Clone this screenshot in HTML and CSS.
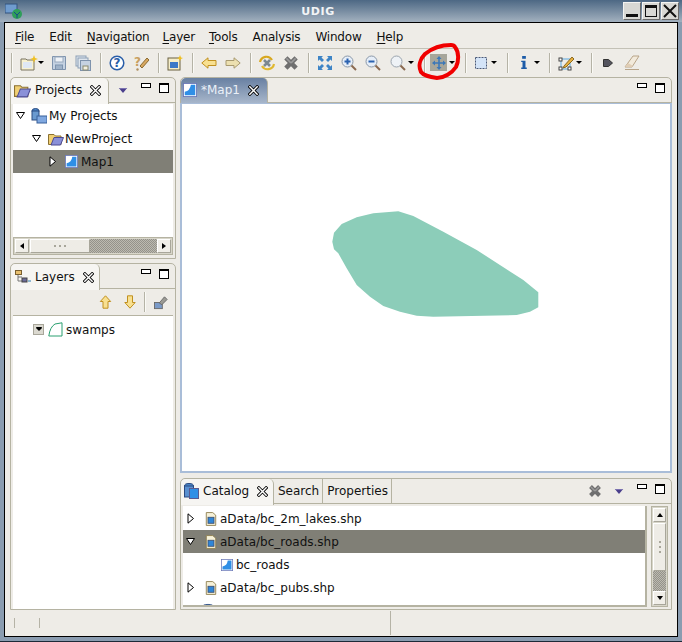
FILE: index.html
```html
<!DOCTYPE html>
<html lang="en">
<head>
    <meta charset="UTF-8">
    <title>UDIG</title>
    <link rel="stylesheet" href="styles.css">
</head>
<body>
<svg class="defs" width="0" height="0">
    <symbol id="map" viewBox="0 0 16 16">
        <rect x="0.5" y="0.5" width="15" height="15" fill="#fff" stroke="#6a78b8"/>
        <path d="M2 14 L2 10 Q8 9 9 2 L14 2 L14 14 Z" fill="#2f8fe6"/>
    </symbol>
    <symbol id="shp" viewBox="0 0 14 16">
        <path d="M1.5 .5 H9 L12.5 3.5 V15.5 H1.5 Z" fill="#f6f1d8" stroke="#8a7a48"/>
        <rect x="3.5" y="6" width="7" height="7" fill="#2f86d8" stroke="#41506e"/>
    </symbol>
    <symbol id="close" viewBox="0 0 12 12">
        <path d="M2 2 L10 10 M10 2 L2 10" stroke="#000" stroke-width="3.4" stroke-linecap="square"/>
        <path d="M2 2 L10 10 M10 2 L2 10" stroke="#fff" stroke-width="1.6" stroke-linecap="square"/>
    </symbol>
    <symbol id="bigx" viewBox="0 0 14 14">
        <path d="M2.5 2.5 L11.5 11.5 M11.5 2.5 L2.5 11.5" stroke="#6f6f6f" stroke-width="4"/>
        <path d="M3 3 L7 7 M11 3 L7 7" stroke="#9a9a9a" stroke-width="1.5"/>
    </symbol>
    <symbol id="view" viewBox="0 0 12 8">
        <path d="M1 1 H11 L6 7 Z" fill="#4a3f8c"/>
        <path d="M1 1 H11 L10 2 H2 Z" fill="#8c84bc"/>
    </symbol>
    <symbol id="min" viewBox="0 0 10 5">
        <rect x="0.5" y="0.5" width="9" height="4" fill="#fff" stroke="#000"/>
    </symbol>
    <symbol id="max" viewBox="0 0 10 10">
        <rect x="0.5" y="0.5" width="9" height="9" fill="#fff" stroke="#000"/>
        <rect x="0" y="0" width="10" height="2" fill="#000"/>
    </symbol>
    <symbol id="open" viewBox="0 0 9 9">
        <path d="M.5 1.5 H8.5 L4.5 7.5 Z" fill="#fff" stroke="#000"/>
    </symbol>
    <symbol id="shut" viewBox="0 0 9 11">
        <path d="M2 .8 V10.2 L7.5 5.5 Z" fill="#fff" stroke="#000"/>
    </symbol>
    <symbol id="folder" viewBox="0 0 16 14">
        <path d="M.5 2.5 H6 L7.5 4 H13 V12.5 H.5 Z" fill="#f0cf73" stroke="#8a7030"/>
        <path d="M3 13 L6 5.5 H15.5 L12.5 13 Z" fill="#8a90d8" stroke="#4c4a90"/>
    </symbol>
</svg>

<div class="window">
    <div class="titlebar">
        <svg class="app-icon" width="18" height="17" viewBox="0 0 18 17">
            <rect x="0" y="1" width="12" height="9" fill="#6f9ccf" stroke="#33527c"/>
            <circle cx="12" cy="11" r="5" fill="#2f9e5a"/>
            <path d="M9 9 L12 12 L15 9 M12 12 V15" stroke="#174a8a" fill="none"/>
        </svg>
        <span class="app-title">UDIG</span>
        <div class="wm-buttons">
            <span class="wm-btn"><svg width="14" height="14" viewBox="0 0 14 14"><rect x="1" y="10" width="12" height="3" fill="#111"/></svg></span>
            <span class="wm-btn"><svg width="14" height="14" viewBox="0 0 14 14"><rect x="1.5" y="2" width="11" height="10.5" fill="none" stroke="#111"/><rect x="1" y="1" width="12" height="3" fill="#111"/></svg></span>
            <span class="wm-btn"><svg width="14" height="14" viewBox="0 0 14 14"><path d="M1 1 L13 13 M13 1 L1 13" stroke="#111" stroke-width="2"/></svg></span>
        </div>
    </div>

    <div class="client">
        <div class="menubar">
            <span class="menu"><u>F</u>ile</span>
            <span class="menu">Edit</span>
            <span class="menu menu-nav"><u>N</u>avigation</span>
            <span class="menu menu-layer"><u>L</u>ayer</span>
            <span class="menu"><u>T</u>ools</span>
            <span class="menu">Analysis</span>
            <span class="menu">Window</span>
            <span class="menu"><u>H</u>elp</span>
        </div>

        <div class="toolbar">
            <span class="sep"></span>
            <span class="tool tool-drop tool-new">
                <svg width="18" height="16" viewBox="0 0 18 16"><path d="M1 4 H6 L7 5 H14 V15 H1 Z" fill="#f7f1d0" stroke="#7a7560"/><rect x="3" y="7" width="9" height="6" fill="#dfe8f4"/><path d="M14 0 L15 3 L18 4 L15 5 L14 8 L13 5 L10 4 L13 3 Z" fill="#f0c020"/></svg>
                <i class="drop"></i>
            </span>
            <span class="tool">
                <svg width="16" height="16" viewBox="0 0 16 16"><path d="M1.5 1.5 H14.5 V14.5 H1.5 Z" fill="#c5d2e2" stroke="#7e93ad"/><rect x="4" y="2" width="8" height="5" fill="#eef2f7" stroke="#98a8bc"/><rect x="4.5" y="10" width="7" height="4.5" fill="#9fb2c8" stroke="#7e93ad"/></svg>
            </span>
            <span class="tool">
                <svg width="16" height="16" viewBox="0 0 16 16"><rect x="1" y="1" width="10" height="10" fill="#dfe6ee" stroke="#8da0b6"/><rect x="3" y="3" width="10" height="10" fill="#dfe6ee" stroke="#8da0b6"/><rect x="5.5" y="5.5" width="10" height="10" fill="#c5d2e2" stroke="#7e93ad"/><rect x="8" y="11" width="5" height="4" fill="#f2f0e0" stroke="#8a8a70"/></svg>
            </span>
            <span class="sep"></span>
            <span class="tool">
                <svg width="16" height="16" viewBox="0 0 16 16"><circle cx="8" cy="8" r="6.8" fill="#fff" stroke="#2a5ea8" stroke-width="1.5"/><text x="8" y="12" class="tool-q">?</text></svg>
            </span>
            <span class="tool">
                <svg width="16" height="16" viewBox="0 0 16 16"><path d="M7 11 L14 3 L16 5 L9 13 Z" fill="#d8a860" stroke="#8a6a30"/><text x="4.5" y="11" class="tool-q tool-q-tan">?</text><circle cx="4.5" cy="14.5" r="1.2" fill="#b09060"/></svg>
            </span>
            <span class="sep"></span>
            <span class="tool">
                <svg width="16" height="16" viewBox="0 0 16 16"><rect x="1" y="3" width="12" height="12" fill="#f5edc8" stroke="#6a6040"/><rect x="3" y="7" width="8" height="6" fill="#3a78c8"/><path d="M13 0 L14 2.5 L16 3 L14 4 L13 6 L12 4 L10 3 L12 2.5 Z" fill="#f0c020"/></svg>
            </span>
            <span class="sep"></span>
            <span class="tool">
                <svg width="16" height="12" viewBox="0 0 16 12"><path d="M.8 6 L7 .8 V3.5 H15 V8.5 H7 V11.2 Z" fill="#f8e090" stroke="#c09020"/></svg>
            </span>
            <span class="tool">
                <svg width="16" height="12" viewBox="0 0 16 12"><path d="M15.2 6 L9 .8 V3.5 H1 V8.5 H9 V11.2 Z" fill="#ece0b0" stroke="#a89a70"/></svg>
            </span>
            <span class="sep"></span>
            <span class="tool">
                <svg width="18" height="16" viewBox="0 0 18 16"><path d="M2 7 A6.5 6.5 0 0 1 14 5" fill="none" stroke="#d8a820" stroke-width="2.2"/><path d="M16 9 A6.5 6.5 0 0 1 4 11" fill="none" stroke="#e0b830" stroke-width="2.2"/><path d="M6 5 L12 11 M12 5 L6 11" stroke="#7a8890" stroke-width="2.6"/></svg>
            </span>
            <span class="tool">
                <svg width="16" height="16" viewBox="0 0 14 14"><use href="#bigx"/></svg>
            </span>
            <span class="sep"></span>
            <span class="tool">
                <svg width="16" height="16" viewBox="0 0 16 16"><path d="M1 6 V1 H6 L4.5 2.5 L7 5 L5 7 L2.5 4.5 Z M15 6 V1 H10 L11.5 2.5 L9 5 L11 7 L13.5 4.5 Z M1 10 V15 H6 L4.5 13.5 L7 11 L5 9 L2.5 11.5 Z M15 10 V15 H10 L11.5 13.5 L9 11 L11 9 L13.5 11.5 Z" fill="#3d84c6"/></svg>
            </span>
            <span class="tool">
                <svg width="16" height="16" viewBox="0 0 16 16"><circle cx="6.5" cy="6.5" r="5.5" fill="#e6eef8" stroke="#8a98a8"/><path d="M3.5 6.5 H9.5 M6.5 3.5 V9.5" stroke="#2a62b0" stroke-width="2"/><path d="M10.5 10.5 L15 15" stroke="#8a6a50" stroke-width="2"/></svg>
            </span>
            <span class="tool">
                <svg width="16" height="16" viewBox="0 0 16 16"><circle cx="6.5" cy="6.5" r="5.5" fill="#e6eef8" stroke="#8a98a8"/><path d="M3.5 6.5 H9.5" stroke="#2a62b0" stroke-width="2"/><path d="M10.5 10.5 L15 15" stroke="#8a6a50" stroke-width="2"/></svg>
            </span>
            <span class="tool tool-drop tool-zoom">
                <svg width="16" height="16" viewBox="0 0 16 16"><circle cx="6.5" cy="6.5" r="5.5" fill="#eef2f6" stroke="#9aa4ae"/><path d="M10.5 10.5 L15 15" stroke="#8a6a50" stroke-width="2"/></svg>
                <i class="drop"></i>
            </span>
            <span class="sep"></span>
            <span class="tool tool-drop tool-move">
                <span class="tool-on">
                    <svg width="14" height="14" viewBox="0 0 14 14"><path d="M7 0 L9.5 3 H7.8 V6.2 H11 V4.5 L14 7 L11 9.5 V7.8 H7.8 V11 H9.5 L7 14 L4.5 11 H6.2 V7.8 H3 V9.5 L0 7 L3 4.5 V6.2 H6.2 V3 H4.5 Z" fill="#3c78b8"/></svg>
                </span>
                <i class="drop"></i>
            </span>
            <span class="sep"></span>
            <span class="tool tool-drop tool-box">
                <svg width="12" height="12" viewBox="0 0 12 12"><rect x="0.5" y="0.5" width="11" height="11" fill="#d4e4f8" stroke="#4a5a78" stroke-dasharray="2 1"/></svg>
                <i class="drop"></i>
            </span>
            <span class="sep"></span>
            <span class="tool tool-drop tool-box tool-info">
                <svg width="6" height="13" viewBox="0 0 6 14"><rect x="1" y="0" width="4" height="3" fill="#1d5ca8"/><path d="M0 5 H4.6 V12.5 H6 V14 H0 V12.5 H1.4 V6.5 H0 Z" fill="#1d5ca8"/></svg>
                <i class="drop"></i>
            </span>
            <span class="sep"></span>
            <span class="tool tool-drop tool-box tool-edit">
                <svg width="16" height="16" viewBox="0 0 16 16"><path d="M3 4 H12 V14 H3 Z" fill="none" stroke="#5aa8e0"/><rect x="1" y="3" width="3" height="3" fill="#fff" stroke="#444"/><rect x="1" y="12" width="3" height="3" fill="#fff" stroke="#444"/><rect x="10" y="12" width="3" height="3" fill="#fff" stroke="#444"/><path d="M6 11 L14 2 L16 4 L8 12 L5 13 Z" fill="#e8b040" stroke="#8a6a20"/></svg>
                <i class="drop"></i>
            </span>
            <span class="sep"></span>
            <span class="tool">
                <svg width="10" height="10" viewBox="0 0 10 10"><path d="M.5 1.5 H5.5 L9.5 5 L5.5 8.5 H.5 Z" fill="#55555f" stroke="#333"/></svg>
            </span>
            <span class="tool">
                <svg width="16" height="16" viewBox="0 0 16 16"><path d="M1 12 L9 1 H15 L8 12 Z" fill="#f2eadb" stroke="#b8a488"/><path d="M1 14.5 H15" stroke="#b8a488"/><path d="M1 12 L4 8 L9 11 L8 12 Z" fill="#e0cdb4"/></svg>
            </span>
        </div>

        <div class="workbench">
            <div class="col-left">
                <section class="panel panel-projects">
                    <div class="tabbar">
                        <div class="tab tab-on tab-projects">
                            <svg width="17" height="15"><use href="#folder"/></svg>
                            <span>Projects</span>
                            <svg class="tab-x" width="11" height="11"><use href="#close"/></svg>
                        </div>
                        <div class="tab-tools">
                            <svg class="t-view" width="10" height="7"><use href="#view"/></svg>
                            <svg class="t-min" width="10" height="5"><use href="#min"/></svg>
                            <svg width="10" height="10"><use href="#max"/></svg>
                        </div>
                    </div>
                    <div class="tree">
                        <div class="row ind-0">
                            <svg class="twist" width="9" height="9"><use href="#open"/></svg>
                            <svg class="row-icon" width="16" height="16" viewBox="0 0 16 16"><ellipse cx="4.5" cy="3" rx="3.5" ry="2.5" fill="#4a86c8" stroke="#2a4a80"/><rect x="1" y="3" width="7" height="9" fill="#6a9ad0" stroke="#2a4a80"/><rect x="6" y="8" width="10" height="7" fill="#80a8e0" stroke="#38609a"/></svg>
                            <span>My Projects</span>
                        </div>
                        <div class="row ind-1">
                            <svg class="twist" width="9" height="9"><use href="#open"/></svg>
                            <svg class="row-icon" width="16" height="14"><use href="#folder"/></svg>
                            <span>NewProject</span>
                        </div>
                        <div class="row ind-2 row-on">
                            <svg class="twist" width="9" height="11"><use href="#shut"/></svg>
                            <svg class="row-icon" width="13" height="13"><use href="#map"/></svg>
                            <span>Map1</span>
                        </div>
                    </div>
                    <div class="hscroll">
                        <span class="sb-btn sb-left"></span>
                        <span class="sb-thumb">
                            <i></i><i></i><i></i>
                        </span>
                        <span class="sb-track"></span>
                        <span class="sb-btn sb-right"></span>
                    </div>
                </section>

                <section class="panel panel-layers">
                    <div class="tabbar">
                        <div class="tab tab-on tab-layers">
                            <svg width="16" height="14" viewBox="0 0 16 14"><path d="M3 4 V11 H7 M3 7 H7" fill="none" stroke="#777"/><rect x="0.5" y="0.5" width="6" height="4" fill="#e8c070" stroke="#7a6030"/><rect x="7" y="8" width="5" height="4" fill="#6a6a98" stroke="#444"/><path d="M13 11 H16" stroke="#2a7ab0"/></svg>
                            <span>Layers</span>
                            <svg class="tab-x" width="11" height="11"><use href="#close"/></svg>
                        </div>
                        <div class="tab-tools">
                            <svg class="t-min" width="10" height="5"><use href="#min"/></svg>
                            <svg width="10" height="10"><use href="#max"/></svg>
                        </div>
                    </div>
                    <div class="view-bar">
                        <svg class="vb-up" width="13" height="14" viewBox="0 0 12 14"><path d="M6 .8 L11.2 6.5 H8.5 V13.2 H3.5 V6.5 H.8 Z" fill="#f8e090" stroke="#c09020"/></svg>
                        <svg width="12" height="14" viewBox="0 0 12 14"><path d="M6 13.2 L11.2 7.5 H8.5 V.8 H3.5 V7.5 H.8 Z" fill="#f8e090" stroke="#c09020"/></svg>
                        <span class="sep vb-sep"></span>
                        <svg width="14" height="15" viewBox="0 0 16 15"><rect x="0.5" y="7.5" width="9" height="7" fill="#7a9ac8" stroke="#666"/><path d="M6 8 L12 1 L15 4 L9 10 Z" fill="#9a9a94" stroke="#666"/></svg>
                    </div>
                    <div class="tree tree-layers">
                        <div class="row ind-layer">
                            <span class="check"><svg width="6" height="4" viewBox="0 0 7 5"><path d="M0 0 H7 V1.5 L3.5 5 L0 1.5 Z" fill="#000"/></svg></span>
                            <svg class="row-icon" width="15" height="15" viewBox="0 0 15 15"><path d="M.8 14 Q2 5 7 2 L14 .8 V14 Z" fill="#fff" stroke="#2aa070"/></svg>
                            <span>swamps</span>
                        </div>
                    </div>
                </section>
            </div>

            <div class="col-right">
                <section class="panel panel-map">
                    <div class="tabbar">
                        <div class="tab tab-blue tab-map">
                            <svg width="14" height="14"><use href="#map"/></svg>
                            <span>*Map1</span>
                            <svg class="tab-x" width="11" height="11"><use href="#close"/></svg>
                        </div>
                        <div class="tab-tools">
                            <svg class="t-min" width="10" height="5"><use href="#min"/></svg>
                            <svg width="10" height="10"><use href="#max"/></svg>
                        </div>
                    </div>
                    <div class="map-area">
                        <svg class="map-svg" viewBox="182 104 488 367">
                            <polygon fill="#8ccdb9" points="332.3,241.7 334,232.7 341.7,224 356.7,217.3 373.3,213.3 398.3,211.3 413.3,216 443.3,231.7 476.7,250 523.3,280 538.3,292.3 538.3,307.3 530,311.7 516.7,315 433.3,316.7 416.7,315.7 400,311.7 383.3,306 370,296.7 356.7,285 346.7,268.3 338.3,253.3 334,249.3"/>
                        </svg>
                    </div>
                </section>

                <section class="panel panel-catalog">
                    <div class="tabbar">
                        <div class="tab tab-on tab-catalog">
                            <svg width="15" height="16" viewBox="0 0 15 16"><ellipse cx="5" cy="3" rx="4.5" ry="2.5" fill="#4a86c8" stroke="#2a4a80"/><rect x="0.5" y="3" width="9" height="11" fill="#5a90d0" stroke="#2a4a80"/><rect x="5.5" y="5.5" width="9" height="10" fill="#2f8fe6" stroke="#5a5a90"/></svg>
                            <span>Catalog</span>
                            <svg class="tab-x" width="11" height="11"><use href="#close"/></svg>
                        </div>
                        <div class="tab tab-off tab-search"><span>Search</span></div>
                        <div class="tab tab-off tab-props"><span>Properties</span></div>
                        <div class="tab-tools">
                            <svg class="t-bigx" width="14" height="14"><use href="#bigx"/></svg>
                            <svg class="t-view" width="10" height="7"><use href="#view"/></svg>
                            <svg class="t-min" width="10" height="5"><use href="#min"/></svg>
                            <svg width="10" height="10"><use href="#max"/></svg>
                        </div>
                    </div>
                    <div class="catalog-body">
                        <div class="tree tree-catalog">
                            <div class="row cat-0">
                                <svg class="twist" width="9" height="11"><use href="#shut"/></svg>
                                <svg class="row-icon" width="12" height="14"><use href="#shp"/></svg>
                                <span>aData/bc_2m_lakes.shp</span>
                            </div>
                            <div class="row cat-0 row-on">
                                <svg class="twist" width="9" height="9"><use href="#open"/></svg>
                                <svg class="row-icon" width="12" height="14"><use href="#shp"/></svg>
                                <span>aData/bc_roads.shp</span>
                            </div>
                            <div class="row cat-1">
                                <svg class="row-icon" width="12" height="12"><use href="#map"/></svg>
                                <span>bc_roads</span>
                            </div>
                            <div class="row cat-0">
                                <svg class="twist" width="9" height="11"><use href="#shut"/></svg>
                                <svg class="row-icon" width="12" height="14"><use href="#shp"/></svg>
                                <span>aData/bc_pubs.shp</span>
                            </div>
                            <div class="row cat-clip">
                                <svg class="row-icon" width="14" height="16" viewBox="0 0 16 16"><ellipse cx="8" cy="3" rx="6" ry="2.5" fill="#4a86c8" stroke="#2a4a80"/><rect x="2" y="3" width="12" height="12" fill="#6a9ad0"/></svg>
                            </div>
                        </div>
                        <div class="vscroll">
                            <span class="sb-btn sb-up"></span>
                            <span class="sb-thumb sb-thumb-v">
                                <i></i><i></i><i></i>
                            </span>
                            <span class="sb-track"></span>
                            <span class="sb-btn sb-down"></span>
                        </div>
                    </div>
                </section>
            </div>
        </div>

        <div class="statusbar">
            <span class="st-cell st-a"></span>
            <span class="st-cell st-b"></span>
            <span class="st-cell st-c"></span>
        </div>
    </div>

    <!-- hand drawn red circle on top of the screenshot -->
    <svg class="scribble" width="44" height="39" viewBox="0 0 44 39">
        <path d="M34 3 C24 3 14 7 8 12 C3 17 1 24 4 30 C7 34 13 35 20 36 C27 36 35 31 39 25 C42 19 42 10 38 5 C37 3 35 3 34 3 Z" fill="none" stroke="#f00000" stroke-width="4"/>
    </svg>
</div>
</body>
</html>
```

FILE: styles.css
```css
*{
    margin:0;
    padding:0;
    box-sizing:border-box;
}
body{
    width:682px;
    height:642px;
    overflow:hidden;
    background:#8396aa;
    font-family:"DejaVu Sans",sans-serif;
    font-size:12px;
    color:#111;
}
.defs{
    position:absolute;
}
svg{
    display:block;
    flex:none;
}
.window{
    position:relative;
    width:682px;
    height:642px;
    display:flex;
    flex-direction:column;
    padding-bottom:4px;
    background:linear-gradient(#4d6884,#a3b1bf 22px,#8a9cb0 22px);
    border-bottom:1px solid #1d2a38;
}

/* title bar */
.titlebar{
    height:22px;
    flex:none;
    display:flex;
    align-items:center;
    padding:0 3px 0 5px;
}
.app-title{
    flex:1;
    text-align:center;
    font-weight:bold;
    font-size:11px;
    letter-spacing:.6px;
    color:#f2f4f6;
    padding-right:10px;
}
.wm-buttons{
    display:flex;
    gap:1px;
}
.wm-btn{
    width:18px;
    height:18px;
    background:#d8d8d4;
    border:1px solid;
    border-color:#f4f4f2 #6a6a6a #6a6a6a #f4f4f2;
    display:flex;
    align-items:center;
    justify-content:center;
}

/* client area */
.client{
    flex:1;
    margin:0 4px;
    border:1px solid #000;
    background:#eeece7;
    display:flex;
    flex-direction:column;
    min-height:0;
}
.menubar{
    height:26px;
    flex:none;
    display:flex;
    align-items:center;
    gap:15px;
    padding:3px 0 0 10px;
    border-bottom:1px solid #c3c1b6;
    letter-spacing:-.2px;
}
.menu-nav{
    margin-right:-2px;
}
.menu-layer{
    margin-right:-1px;
}
.menu u{
    text-underline-offset:2px;
}
.toolbar{
    height:27px;
    flex:none;
    display:flex;
    align-items:center;
    padding:0 0 0 1px;
}
.sep{
    width:2px;
    height:20px;
    margin:0 3px 0 5px;
    background:#b5b3a6;
    border-right:1px solid #fafaf6;
    flex:none;
}
.tool{
    width:24px;
    height:22px;
    flex:none;
    display:flex;
    align-items:center;
    justify-content:center;
}
.tool-drop{
    justify-content:flex-start;
    gap:2px;
    padding-left:4px;
}
.tool-new{
    width:31px;
    gap:0;
}
.tool-zoom{
    width:34px;
    padding-left:5px;
}
.tool-move{
    width:31px;
    padding-left:0;
}
.tool-box{
    width:32px;
    padding-left:5px;
    gap:4px;
}
.tool-info{
    padding-left:9px;
    gap:7px;
}
.tool-edit{
    padding-left:4px;
    gap:2px;
}
.tool-on{
    width:17px;
    height:17px;
    margin-left:1px;
    background:#a7a69a;
    display:flex;
    align-items:center;
    justify-content:center;
}
.drop{
    width:0;
    height:0;
    border:3px solid transparent;
    border-top-color:#000;
    border-bottom:0;
}
.tool-q{
    font-size:12px;
    font-weight:bold;
    fill:#2a5ea8;
    text-anchor:middle;
}
.tool-q-tan{
    fill:#c8a060;
}

/* panels */
.workbench{
    flex:1;
    min-height:0;
    display:grid;
    grid-template-columns:166px 492px;
    gap:4px;
    padding-left:5px;
    padding-top:1px;
}
.col-left,
.col-right{
    display:flex;
    flex-direction:column;
    min-height:0;
}
.col-left{
    gap:4px;
}
.col-right{
    gap:5px;
}
.panel{
    border:1px solid #b5b3a2;
    border-radius:5px 5px 0 0;
    display:flex;
    flex-direction:column;
    background:#eeece7;
    min-height:0;
}
.panel-projects{
    height:182px;
}
.panel-layers{
    height:347px;
}
.panel-map{
    height:396px;
}
.panel-catalog{
    height:132px;
}
.tabbar{
    height:25px;
    flex:none;
    display:flex;
    border-bottom:1px solid #b5b3a2;
}
.tab{
    display:flex;
    align-items:center;
    height:25px;
    gap:4px;
    padding-left:3px;
    padding-bottom:2px;
    flex:none;
}
.tab-on{
    background:#f6f5f2;
    border-right:1px solid #b5b3a2;
    border-radius:5px 5px 0 0;
    height:26px;
}
.tab-x{
    margin-left:4px;
}
.tab-projects{
    width:98px;
}
.tab-layers{
    width:89px;
    padding:0 0 0 4px;
}
.tab-blue{
    height:26px;
    width:87px;
    padding-left:2px;
    gap:4px;
    color:#eaf0f8;
    background:linear-gradient(#6880a2,#a9b8cc);
    border-radius:5px 5px 0 0;
    border-right:1px solid #b5b3a2;
}
.tab-catalog{
    width:93px;
    padding-left:3px;
}
.tab-off{
    border-right:1px solid #b5b3a2;
    padding:0 3px 2px 4px;
}
.tab-tools{
    margin-left:auto;
    display:flex;
    align-items:flex-start;
    padding:5px 6px 0 0;
    gap:8px;
}
.t-view{
    margin:4px 5px 0 0;
}
.t-bigx{
    margin:0 4px 0 0;
}
.view-bar{
    height:27px;
    flex:none;
    display:flex;
    align-items:center;
    justify-content:flex-end;
    padding-right:5px;
    gap:8px;
    margin:0 2px;
    border-bottom:1px solid #b5b3a2;
}
.vb-up{
    margin-right:4px;
}
.vb-sep{
    margin:0;
    height:20px;
}

/* trees */
.tree{
    background:#fff;
    margin:1px 2px 0;
    flex:1;
    min-height:0;
    overflow:hidden;
}
.tree-layers{
    margin-top:0;
}
.row{
    height:23px;
    display:flex;
    align-items:center;
    position:relative;
}
.row span{
    padding-top:1px;
}
.row-on{
    background:#807f76;
}
.row-icon{
    margin-right:3px;
}
.ind-0{
    padding-left:3px;
}
.ind-0 .twist{
    margin-right:6px;
}
.ind-0 .row-icon{
    margin-right:2px;
}
.ind-1{
    padding-left:19px;
}
.ind-1 .twist{
    margin-right:7px;
}
.ind-1 .row-icon{
    margin-right:1px;
}
.ind-2{
    padding-left:35px;
}
.ind-2 .twist{
    margin-right:8px;
}
.ind-layer{
    padding-left:20px;
    height:26px;
}
.ind-layer .check{
    padding-top:0;
}
.check{
    width:11px;
    height:11px;
    margin-right:4px;
    background:#dbd9d0;
    border:1px solid #a8a69a;
    display:flex;
    align-items:center;
    justify-content:center;
}

/* scrollbars */
.hscroll{
    height:18px;
    flex:none;
    margin:0 2px 3px;
    display:flex;
    border:1px solid #b5b3a2;
    padding:1px;
    background:#d8d6ca;
}
.sb-btn{
    width:14px;
    flex:none;
    background:#f0eee8;
    border:1px solid;
    border-color:#fff #a8a69a #a8a69a #fff;
    display:flex;
    align-items:center;
    justify-content:center;
}
.sb-btn::after{
    content:"";
    width:0;
    height:0;
    border:3px solid transparent;
}
.sb-left::after{
    border-right:4px solid #000;
    border-left:0;
}
.sb-right::after{
    border-left:4px solid #000;
    border-right:0;
}
.sb-up::after{
    border-bottom:4px solid #000;
    border-top:0;
}
.sb-down::after{
    border-top:4px solid #000;
    border-bottom:0;
}
.sb-thumb{
    width:60px;
    flex:none;
    margin-left:1px;
    background:#eeece6;
    border:1px solid;
    border-color:#fff #a8a69a #a8a69a #fff;
    display:flex;
    align-items:center;
    justify-content:center;
    gap:3px;
}
.sb-thumb i{
    width:2px;
    height:2px;
    background:#a8a69a;
}
.sb-track{
    flex:1;
    background:repeating-conic-gradient(#94928a 0 25%,#bcbab0 0 50%) 0 0/2px 2px;
}
.catalog-body{
    flex:1;
    min-height:0;
    display:flex;
    padding:2px 0 2px 2px;
}
.tree-catalog{
    margin:0;
    padding-top:1px;
    border-right:2px solid #b5b3a2;
    border-bottom:2px solid #b5b3a2;
    flex:none;
    width:464px;
}
.cat-0{
    padding-left:3px;
}
.cat-0 .twist{
    margin-right:10px;
}
.cat-1{
    padding-left:38px;
}
.cat-clip{
    padding-left:18px;
}
.vscroll{
    width:17px;
    height:101px;
    margin-left:4px;
    display:flex;
    flex-direction:column;
    border:1px solid #b5b3a2;
    padding:1px;
    background:#d8d6ca;
    flex:none;
}
.vscroll .sb-btn{
    width:auto;
    height:14px;
}
.sb-thumb-v{
    width:auto;
    height:48px;
    margin:1px 0 0;
    flex-direction:column;
}
.map-area{
    flex:1;
    min-height:0;
    margin:0 -1px -1px;
    border:2px solid #a9bdd8;
    border-top-width:1px;
    background:#fff;
}
.map-svg{
    width:100%;
    height:100%;
}

/* status bar */
.statusbar{
    height:26px;
    flex:none;
    display:flex;
    align-items:center;
}
.st-cell{
    width:1px;
    background:#b5b3a6;
}
.st-a{
    height:10px;
    margin-left:9px;
}
.st-b{
    height:10px;
    margin-left:24px;
}
.st-c{
    height:24px;
    margin-left:350px;
}

/* red mark, sits over the toolbar */
.scribble{
    position:absolute;
    left:417px;
    top:42px;
}
```
